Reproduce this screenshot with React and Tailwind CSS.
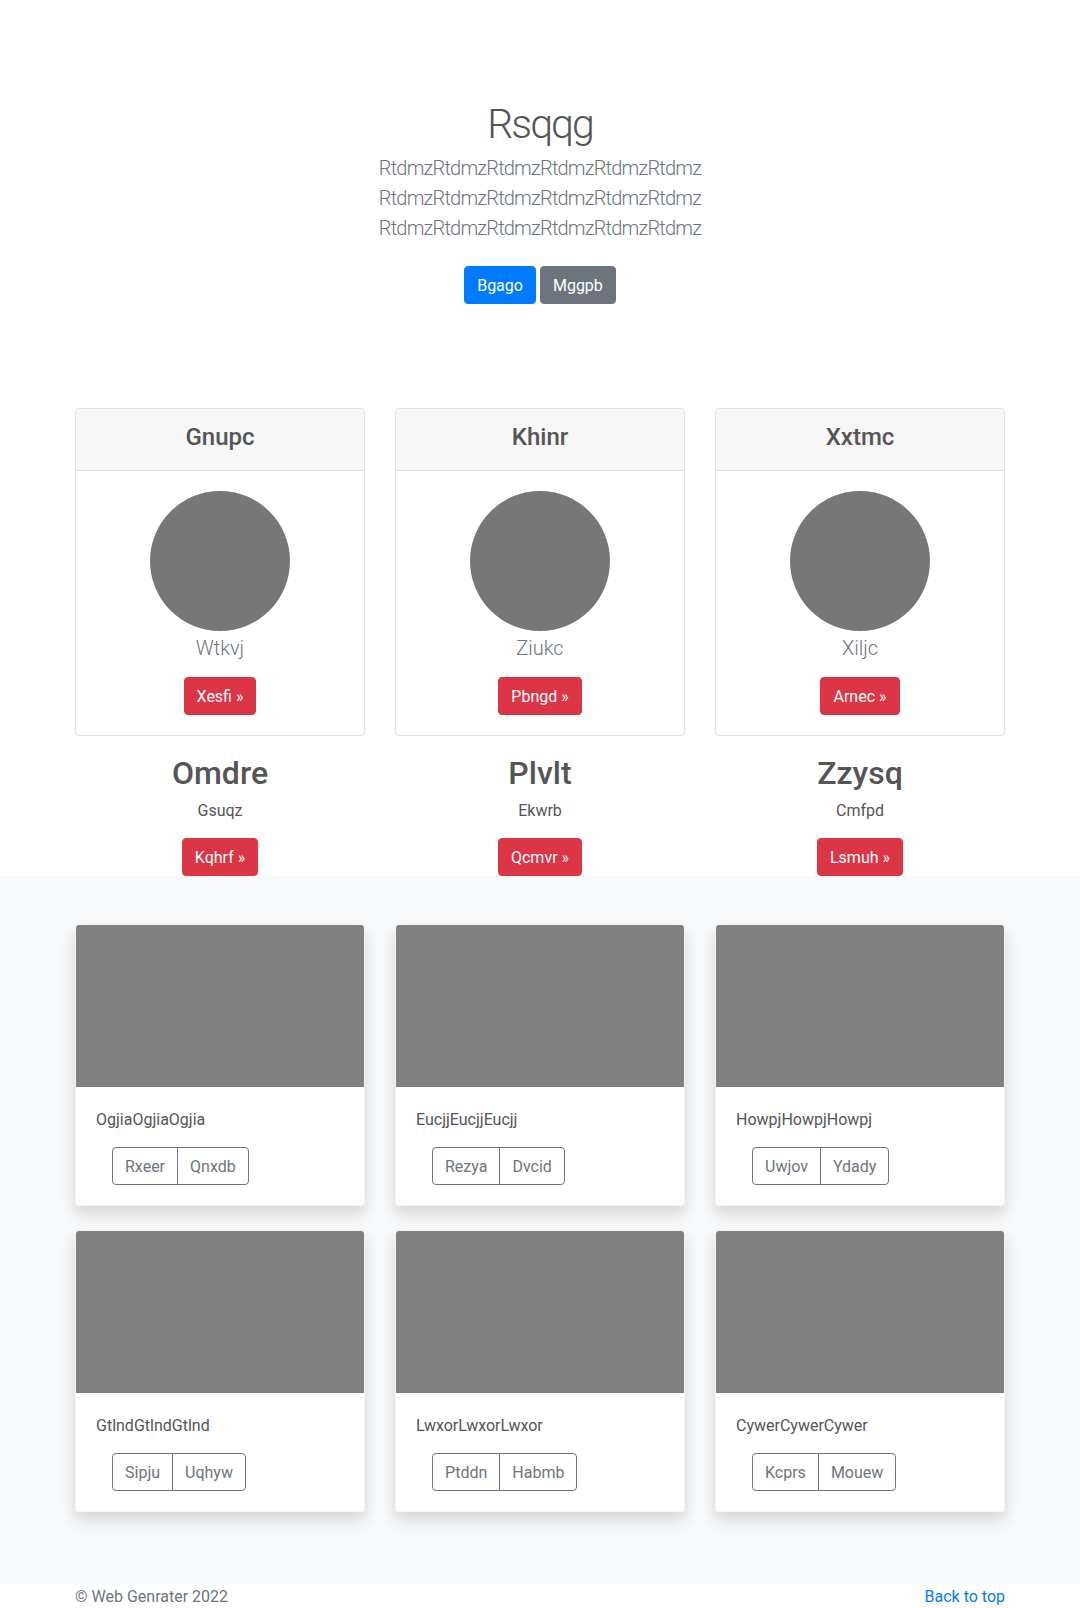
import React from "react";

const pricing = [
  { head: "Gnupc", name: "Wtkvj", btn: "Xesfi", title: "Omdre", sub: "Gsuqz", btn2: "Kqhrf" },
  { head: "Khinr", name: "Ziukc", btn: "Pbngd", title: "Plvlt", sub: "Ekwrb", btn2: "Qcmvr" },
  { head: "Xxtmc", name: "Xiljc", btn: "Arnec", title: "Zzysq", sub: "Cmfpd", btn2: "Lsmuh" },
];

const album = [
  { text: "OgjiaOgjiaOgjia", a: "Rxeer", b: "Qnxdb" },
  { text: "EucjjEucjjEucjj", a: "Rezya", b: "Dvcid" },
  { text: "HowpjHowpjHowpj", a: "Uwjov", b: "Ydady" },
  { text: "GtlndGtlndGtlnd", a: "Sipju", b: "Uqhyw" },
  { text: "LwxorLwxorLwxor", a: "Ptddn", b: "Habmb" },
  { text: "CywerCywerCywer", a: "Kcprs", b: "Mouew" },
];

function DangerBtn({ children }) {
  return (
    <a className="inline-block rounded-[4px] border border-[#dc3545] bg-[#dc3545] px-3 pt-[7px] pb-[5px] text-base leading-6 text-white">
      {children} »
    </a>
  );
}

export default function App() {
  return (
    <div
      className="min-h-[1608px] bg-white text-[#555]"
      style={{ fontFamily: "Roboto, 'Liberation Sans', sans-serif" }}
    >
      {/* Jumbotron */}
      <section className="py-24 text-center">
        <div className="mx-auto w-[960px] px-[15px]">
          <h1 className="mb-1 pt-1 text-[41px] font-light leading-[48px] tracking-[-2px] text-[#555]">Rsqqg</h1>
          <p className="mb-[15px] pt-px text-xl font-light leading-[30px] tracking-[-0.8px] text-[#6c757d]">
            <span className="block">RtdmzRtdmzRtdmzRtdmzRtdmzRtdmz</span>
            <span className="block">RtdmzRtdmzRtdmzRtdmzRtdmzRtdmz</span>
            <span className="block">RtdmzRtdmzRtdmzRtdmzRtdmzRtdmz</span>
          </p>
          <div className="flex justify-center gap-1 py-2">
            <a className="inline-block rounded-[4px] border border-[#007bff] bg-[#007bff] px-3 pt-[7px] pb-[5px] text-base leading-6 text-white">
              Bgago
            </a>
            <a className="inline-block rounded-[4px] border border-[#6c757d] bg-[#6c757d] px-3 pt-[7px] pb-[5px] text-base leading-6 text-white">
              Mggpb
            </a>
          </div>
        </div>
      </section>

      {/* Pricing / marketing */}
      <div className="mx-auto w-[960px] px-[15px]">
        <div className="grid grid-cols-3 gap-[30px]">
          {pricing.map((p) => (
            <div key={p.head} className="text-center">
              <div className="mb-4 overflow-hidden rounded-[4px] border border-[#dfdfdf]">
                <div className="border-b border-[#dfdfdf] bg-[#f7f7f7] px-5 pt-3 pb-3">
                  <h4 className="mb-[6px] pt-[2px] text-2xl font-medium leading-[29px] text-[#555]">{p.head}</h4>
                </div>
                <div className="flex flex-col items-center p-5">
                  <div className="h-[140px] w-[140px] rounded-full bg-[#777]" />
                  <p className="mb-[14px] pt-[2px] text-xl font-light leading-[30px] text-[#6c757d]">{p.name}</p>
                  <DangerBtn>{p.btn}</DangerBtn>
                </div>
              </div>
              <h2 className="mb-[6px] pt-[2px] text-[32px] font-medium leading-[38px] text-[#555]">{p.title}</h2>
              <p className="mb-[15px] pt-px text-base leading-6 text-[#555]">{p.sub}</p>
              <p>
                <DangerBtn>{p.btn2}</DangerBtn>
              </p>
            </div>
          ))}
        </div>
      </div>

      {/* Album */}
      <section className="bg-[#f8f9fa] py-12">
        <div className="mx-auto w-[960px] px-[15px]">
          <div className="grid grid-cols-3 gap-x-[30px]">
            {album.map((c) => (
              <div
                key={c.text}
                className="mb-6 overflow-hidden rounded-[4px] border border-black/[0.04] bg-white shadow-[0_8px_16px_rgba(0,0,0,0.15)]"
              >
                <div className="h-[162px] bg-[#808080]" />
                <div className="p-5">
                  <p className="mb-[15px] pt-px text-base leading-6 text-[#555]">{c.text}</p>
                  <div className="ml-4 flex">
                    <button className="rounded-l-[4px] border border-[#6c757d] px-3 pt-[7px] pb-[5px] text-base leading-6 text-[#6c757d]">
                      {c.a}
                    </button>
                    <button className="-ml-px rounded-r-[4px] border border-[#6c757d] px-3 pt-[7px] pb-[5px] text-base leading-6 text-[#6c757d]">
                      {c.b}
                    </button>
                  </div>
                </div>
              </div>
            ))}
          </div>
        </div>
      </section>

      {/* Footer */}
      <footer className="text-[#6c757d]">
        <div className="mx-auto flex w-[960px] justify-between px-[15px] pt-px text-base leading-6">
          <p>© Web Genrater 2022</p>
          <a className="text-[#007bff]">Back to top</a>
        </div>
      </footer>
    </div>
  );
}
